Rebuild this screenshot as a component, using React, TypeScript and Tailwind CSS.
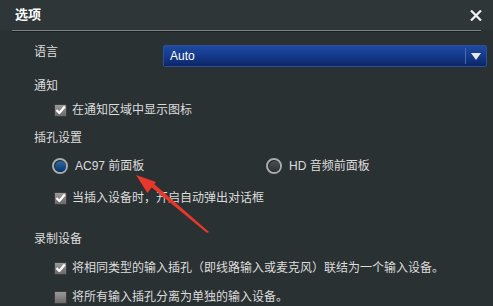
import React from "react";

const font = { fontFamily: '"Liberation Sans", "Noto Sans CJK SC", sans-serif' };

const Check = ({ checked }: { checked: boolean }) => (
  <span className="w-[13px] h-[13px] shrink-0 flex items-center justify-center rounded-[1px] border border-[#3c3c3c] bg-gradient-to-b from-[#9a9a9a] to-[#6a6a6a]">
    {checked && (
      <svg width="11" height="10" viewBox="0 0 11 10">
        <path d="M1.5 5 L4.3 8 L9.8 1.5" fill="none" stroke="#ffffff" strokeWidth="2.2" strokeLinejoin="round" />
      </svg>
    )}
  </span>
);

const Radio = ({ checked }: { checked: boolean }) => (
  <span className="w-[16px] h-[16px] shrink-0 rounded-full border-[2px] border-[#a8acae] flex items-center justify-center bg-[#1c2224]">
    <span
      className={
        checked
          ? "w-[11px] h-[11px] rounded-full bg-gradient-to-b from-[#2a6aa8] to-[#0b3568]"
          : "w-[11px] h-[11px] rounded-full bg-gradient-to-b from-[#4a5052] to-[#2c3234]"
      }
    />
  </span>
);

const CheckRow = ({ checked, children }: { checked: boolean; children: React.ReactNode }) => (
  <div className="flex items-center gap-[5px] pl-[20px]">
    <Check checked={checked} />
    <span className="text-[12px] leading-[14px] text-[#dcdcdc]">{children}</span>
  </div>
);

export default function App() {
  return (
    <div className="relative w-[493px] h-[306px] overflow-hidden bg-[#2a3133]" style={font}>
      <div className="h-[30px] flex items-center justify-between pl-[15px] pr-[11px] bg-[#2e3638]">
        <span className="text-[13px] font-bold text-white">选项</span>
        <svg width="12" height="11" viewBox="0 0 12 11">
          <path d="M1 0.5 L11 10.5 M11 0.5 L1 10.5" stroke="#f2f2f2" strokeWidth="2.2" />
        </svg>
      </div>
      <div className="mx-[12px] h-[2px] bg-[#7a8284] border-b border-[#1a1f20]" />

      <div className="pl-[34px] pr-[6px] flex flex-col">
        <div className="flex items-start justify-between mt-[13px]">
          <span className="text-[12px] leading-[14px] text-[#dcdcdc]">语言</span>
          <div className="w-[324px] h-[22px] flex items-center rounded-[2px] border border-[#2c4f98] bg-gradient-to-b from-[#1e4aa2] via-[#143a8a] to-[#0c2668]">
            <span className="flex-1 pl-[6px] text-[12px] text-white">Auto</span>
            <span className="w-px h-[16px] bg-[#4a6ab0]" />
            <span className="w-[20px] flex justify-center">
              <svg width="10" height="7" viewBox="0 0 10 7">
                <path d="M0 0 H10 L5 7 Z" fill="#e8e8e8" />
              </svg>
            </span>
          </div>
        </div>

        <span className="mt-[12px] text-[12px] leading-[14px] text-[#dcdcdc]">通知</span>
        <div className="mt-[10px]">
          <CheckRow checked>在通知区域中显示图标</CheckRow>
        </div>

        <span className="mt-[14px] text-[12px] leading-[14px] text-[#dcdcdc]">插孔设置</span>
        <div className="mt-[12px] flex items-center pl-[18px]">
          <div className="w-[214px] flex items-center gap-[7px]">
            <Radio checked />
            <span className="text-[12px] text-[#dcdcdc]">AC97 前面板</span>
          </div>
          <div className="flex items-center gap-[7px]">
            <Radio checked={false} />
            <span className="text-[12px] text-[#dcdcdc]">HD 音频前面板</span>
          </div>
        </div>
        <div className="mt-[16px]">
          <CheckRow checked>当插入设备时，开启自动弹出对话框</CheckRow>
        </div>

        <span className="mt-[27px] text-[12px] leading-[14px] text-[#dcdcdc]">录制设备</span>
        <div className="mt-[15px]">
          <CheckRow checked>将相同类型的输入插孔（即线路输入或麦克风）联结为一个输入设备。</CheckRow>
        </div>
        <div className="mt-[15px]">
          <CheckRow checked={false}>将所有输入插孔分离为单独的输入设备。</CheckRow>
        </div>
      </div>

      <svg className="absolute left-0 top-0 pointer-events-none" width="493" height="306" viewBox="0 0 493 306">
        <polygon points="136,175 147.4,193 156,182" fill="#e8372b" />
        <polygon points="150,186 153,183 209,232 207,233" fill="#e8372b" />
      </svg>
    </div>
  );
}
